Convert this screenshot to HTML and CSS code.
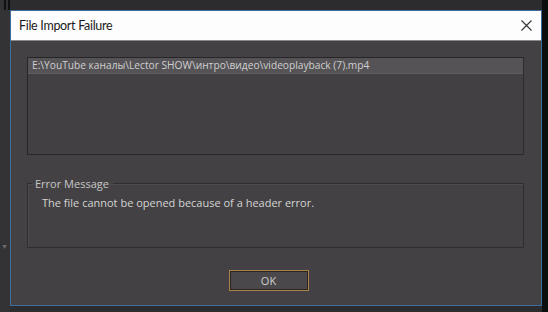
FILE: index.html
```html
<!DOCTYPE html>
<html lang="en">
<head>
    <meta charset="UTF-8">
    <title>File Import Failure</title>
    <link rel="stylesheet" href="styles.css">
</head>
<body>
    <div class="backdrop">
        <div class="side-strip">
            <span class="strip-line"></span>
            <span class="strip-line"></span>
            <span class="strip-arrow">&#9660;</span>
        </div>

        <div class="dialog">
            <div class="title-bar">
                <span class="title">File Import Failure</span>
                <button class="close-btn" aria-label="Close">
                    <svg width="11" height="11" viewBox="0 0 11 11">
                        <path d="M0.5 0.5 L10.5 10.5 M10.5 0.5 L0.5 10.5" stroke="#333" stroke-width="1.1" fill="none"/>
                    </svg>
                </button>
            </div>

            <div class="dialog-body">
                <ul class="file-list">
                    <li class="file-row selected">E:\YouTube каналы\Lector SHOW\интро\видео\videoplayback (7).mp4</li>
                </ul>

                <fieldset class="group-box">
                    <legend>Error Message</legend>
                    <p class="message">The file cannot be opened because of a header error.</p>
                </fieldset>

                <div class="actions">
                    <button class="ok-btn">OK</button>
                </div>
            </div>
        </div>

        <div class="right-strip"></div>
    </div>
</body>
</html>
```

FILE: styles.css
```css
body {
    margin: 0;
    background-color: #2c2b2d;
    font-family: 'Open Sans', 'Noto Sans', sans-serif;
    overflow: hidden;
}

.backdrop {
    display: flex;
    height: 312px;
}

.side-strip {
    width: 10px;
    flex-shrink: 0;
    background-color: #333234;
    position: relative;
}

.strip-line {
    display: block;
    position: absolute;
    top: 0;
    width: 2px;
    height: 10px;
    background-color: #111;
}

.strip-line:first-child { left: 4px; }
.strip-line:nth-child(2) { left: 8px; }

.strip-arrow {
    position: absolute;
    left: 1px;
    top: 242px;
    font-size: 7px;
    color: #6d6d70;
}

.right-strip {
    flex: 1;
    background-color: #0d0e10;
}

.dialog {
    margin-top: 10px;
    width: 530px;
    height: 294px;
    border: 1px solid #3f6e9e;
    background-color: #434143;
    display: flex;
    flex-direction: column;
}

.title-bar {
    height: 29px;
    background-color: #fdfdfd;
    border-bottom: 1px solid #8a8a8a;
    display: flex;
    align-items: center;
    justify-content: space-between;
    padding-left: 8px;
}

.title {
    font-family: 'Lato', 'Noto Sans', sans-serif;
    font-size: 12.5px;
    letter-spacing: -0.3px;
    color: #1a1a1a;
}

.close-btn {
    background: none;
    border: none;
    padding: 0;
    margin-right: 8px;
    width: 14px;
    height: 14px;
    display: flex;
    align-items: center;
    justify-content: center;
}

.dialog-body {
    flex: 1;
    padding: 16px 17px 0 16px;
    display: flex;
    flex-direction: column;
}

.file-list {
    list-style: none;
    margin: 0;
    padding: 0;
    height: 96px;
    border: 1px solid #262527;
    border-right-color: #2c2b2d;
    border-bottom-color: #2a292b;
    background-color: #424042;
}

.file-row {
    height: 15px;
    line-height: 15px;
    padding-left: 4px;
    font-size: 10.2px;
    color: #cfcfcf;
    white-space: nowrap;
}

.file-row.selected {
    background-color: #555356;
    border-bottom: 1px solid #5e5c5f;
}

.group-box {
    margin: 21px 0 0 0;
    padding: 0 0 0 14px;
    height: 70px;
    border: 1px solid #2e2d2f;
    box-shadow: inset 1px 1px 0 #4d4b4d;
}

.group-box legend {
    padding: 0 4px 0 3px;
    margin-left: -10px;
    font-size: 11px;
    color: #c6c6c6;
}

.message {
    margin: 4px 0 0 0;
    font-size: 11px;
    color: #d4d4d4;
}

.actions {
    display: flex;
    justify-content: center;
    padding-top: 22px;
    padding-right: 14px;
}

.ok-btn {
    width: 80px;
    height: 21px;
    border: 1px solid #a8844a;
    box-shadow: inset 0 0 0 1px #2a2522;
    background-color: #4a484a;
    color: #cfcfcf;
    font-family: 'Open Sans', sans-serif;
    font-size: 11px;
    padding: 0;
}
```
